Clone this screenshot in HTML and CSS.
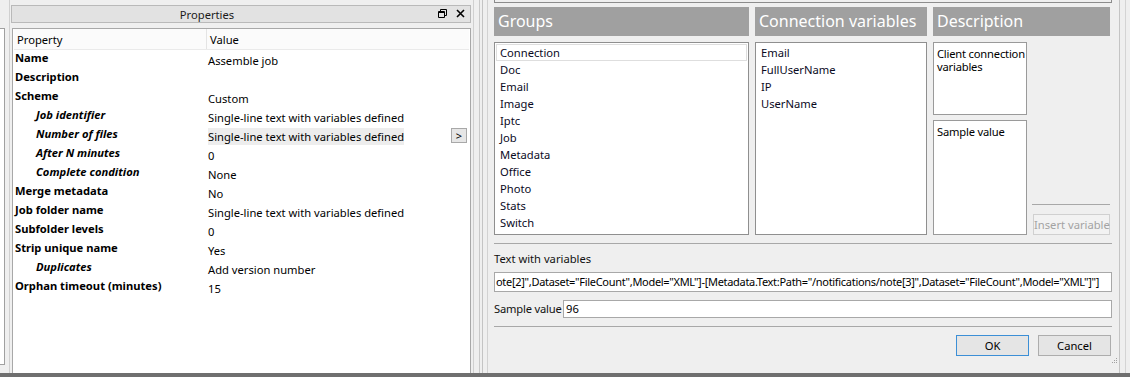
FILE: index.html
```html
<!DOCTYPE html>
<html lang="en">
<head>
    <meta charset="UTF-8">
    <title>Properties - Define text with variables</title>
    <link rel="stylesheet" href="styles.css">
</head>
<body>
    <div class="screen">
        <!-- Neighbouring panel, mostly cut off -->
        <div class="edge-strip">
            <div class="edge-box"></div>
        </div>

        <!-- Properties panel -->
        <section class="props">
            <header class="props-title">
                <span class="props-title-text">Properties</span>
                <span class="title-icons">
                    <svg width="9" height="9" viewBox="0 0 9 9">
                        <path d="M2.5 0.5h6v6h-2M2.5 0.5v2M0.5 2.5h6v6h-6z M0.5 3.5h6" fill="none" stroke="#000" stroke-width="1"/>
                    </svg>
                    <svg width="9" height="9" viewBox="0 0 9 9">
                        <path d="M1 1l7 7M8 1l-7 7" stroke="#000" stroke-width="1.6"/>
                    </svg>
                </span>
            </header>
            <div class="props-table">
                <div class="props-head">
                    <div class="head-prop">Property</div>
                    <div class="head-val">Value</div>
                </div>
                <div class="prop-row"><div class="prop-name">Name</div><div class="prop-val">Assemble job</div></div>
                <div class="prop-row"><div class="prop-name">Description</div><div class="prop-val"></div></div>
                <div class="prop-row"><div class="prop-name">Scheme</div><div class="prop-val">Custom</div></div>
                <div class="prop-row sub"><div class="prop-name">Job identifier</div><div class="prop-val">Single-line text with variables defined</div></div>
                <div class="prop-row sub">
                    <div class="prop-name">Number of files</div>
                    <div class="prop-val"><span class="val-edit">Single-line text with variables defined</span></div>
                    <button class="more-btn">&gt;</button>
                </div>
                <div class="prop-row sub"><div class="prop-name">After N minutes</div><div class="prop-val">0</div></div>
                <div class="prop-row sub"><div class="prop-name">Complete condition</div><div class="prop-val">None</div></div>
                <div class="prop-row"><div class="prop-name">Merge metadata</div><div class="prop-val">No</div></div>
                <div class="prop-row"><div class="prop-name">Job folder name</div><div class="prop-val">Single-line text with variables defined</div></div>
                <div class="prop-row"><div class="prop-name">Subfolder levels</div><div class="prop-val">0</div></div>
                <div class="prop-row"><div class="prop-name">Strip unique name</div><div class="prop-val">Yes</div></div>
                <div class="prop-row sub"><div class="prop-name">Duplicates</div><div class="prop-val">Add version number</div></div>
                <div class="prop-row"><div class="prop-name">Orphan timeout (minutes)</div><div class="prop-val">15</div></div>
            </div>
        </section>

        <div class="splitter"></div>

        <!-- Variables dialog -->
        <section class="dialog">
            <div class="dialog-top"></div>

            <div class="var-grid">
                <div class="col-head">Groups</div>
                <div class="col-head">Connection variables</div>
                <div class="col-head span-2">Description</div>

                <ul class="list-box">
                    <li class="selected">Connection</li>
                    <li>Doc</li>
                    <li>Email</li>
                    <li>Image</li>
                    <li>Iptc</li>
                    <li>Job</li>
                    <li>Metadata</li>
                    <li>Office</li>
                    <li>Photo</li>
                    <li>Stats</li>
                    <li>Switch</li>
                </ul>

                <ul class="list-box">
                    <li>Email</li>
                    <li>FullUserName</li>
                    <li>IP</li>
                    <li>UserName</li>
                </ul>

                <div class="desc-col">
                    <div class="desc-box">Client connection variables</div>
                    <div class="sample-box">Sample value</div>
                </div>

                <div class="insert-col">
                    <div class="insert-rule"></div>
                    <button class="btn disabled">Insert variable</button>
                </div>
            </div>

            <div class="rule"></div>

            <div class="field-label">Text with variables</div>
            <div class="text-input var-text">ote[2]",Dataset="FileCount",Model="XML"]-[Metadata.Text:Path="/notifications/note[3]",Dataset="FileCount",Model="XML"]"]</div>

            <div class="sample-row">
                <span class="field-label">Sample value</span>
                <div class="text-input sample-input">96</div>
            </div>

            <div class="rule"></div>

            <div class="dialog-buttons">
                <button class="btn default">OK</button>
                <button class="btn">Cancel</button>
            </div>

            <svg class="grip" width="7" height="7" viewBox="0 0 7 7">
                <rect x="5" y="1" width="1" height="1" fill="#a0a0a0"/>
                <rect x="3" y="3" width="1" height="1" fill="#a0a0a0"/>
                <rect x="5" y="3" width="1" height="1" fill="#a0a0a0"/>
                <rect x="1" y="5" width="1" height="1" fill="#a0a0a0"/>
                <rect x="3" y="5" width="1" height="1" fill="#a0a0a0"/>
                <rect x="5" y="5" width="1" height="1" fill="#a0a0a0"/>
            </svg>
        </section>

        <div class="right-strip"></div>
    </div>
    <div class="bottom-border"></div>
</body>
</html>
```

FILE: styles.css
```css
/* Global Styling */
body {
    margin: 0;
    font-family: 'Segoe UI', 'Noto Sans', sans-serif;
    font-size: 11.2px;
    color: #000;
    background: #efefef;
    width: 1130px;
    height: 377px;
    overflow: hidden;
}

.screen {
    display: flex;
    height: 373px;
}

.bottom-border {
    height: 4px;
    background: #6f6f6f;
}

ul {
    margin: 0;
    padding: 0;
    list-style: none;
}

button {
    font-family: inherit;
    font-size: 11.2px;
}

/* Left edge */
.edge-strip {
    width: 10px;
    border-right: 1px solid #d0d0d0;
    box-sizing: border-box;
    padding-top: 28px;
}

.edge-box {
    width: 4px;
    height: 335px;
    background: #fff;
    border: 1px solid #a0a0a0;
    border-left: none;
}

/* Properties panel */
.props {
    width: 464px;
    display: flex;
    flex-direction: column;
    padding: 5px 2px 0 1px;
    box-sizing: border-box;
    border-right: 1px solid #d0d0d0;
}

.props-title {
    height: 18px;
    display: flex;
    align-items: center;
    background: #e2e2e2;
    border: 1px solid #b9b9b9;
    box-sizing: border-box;
    position: relative;
}

.props-title-text {
    flex: 1;
    text-align: center;
    padding-right: 68px;
    color: #1a1a1a;
}

.title-icons {
    position: absolute;
    right: 5px;
    top: 3px;
    display: flex;
    gap: 9px;
}

.props-table {
    flex: 1;
    margin-top: 5px;
    margin-left: 1px;
    background: #fff;
    border: 1px solid #a8a8a8;
    border-bottom: none;
}

.props-head {
    display: flex;
    height: 20px;
    line-height: 21px;
    background: #fbfbfb;
    border-bottom: 1px solid #eaeaea;
    margin: 0 1px;
}

.head-prop {
    width: 189px;
    padding-left: 3px;
    border-right: 1px solid #e4e4e4;
}

.head-val {
    padding-left: 3px;
}

.prop-row {
    display: flex;
    height: 19px;
    line-height: 16px;
    position: relative;
}

.prop-name {
    width: 193px;
    padding-left: 2px;
    font-weight: bold;
}

.prop-row.sub .prop-name {
    padding-left: 23px;
    width: 172px;
    font-style: italic;
}

.prop-val {
    padding-top: 3px;
}

.val-edit {
    background: #ededed;
    padding: 1px 0;
}

.more-btn {
    position: absolute;
    right: 3px;
    top: 2px;
    width: 16px;
    height: 15px;
    padding: 0;
    line-height: 12px;
    border: 1px solid #a8a8a8;
    background: #e6e6e6;
    font-size: 11px;
}

/* Splitter */
.splitter {
    width: 6px;
    border-right: 1px solid #c9c9c9;
    box-sizing: border-box;
}

/* Dialog */
.dialog {
    position: relative;
    margin-left: 2px;
    width: 638px;
    padding: 0 7px 0 11px;
    box-sizing: border-box;
    border-left: 1px solid #c4c4c4;
    border-right: 1px solid #c4c4c4;
    box-shadow: inset 4px 0 0 #efefef, inset 5px 0 0 #d2d2d2;
}

.dialog-top {
    height: 2px;
    border: 1px solid #8c8c8c;
    border-top: none;
    margin-bottom: 4px;
}

.var-grid {
    display: grid;
    grid-template-columns: 255px 172px 94px 77px;
    grid-template-rows: 29px 193px;
    gap: 6px;
}

.col-head {
    background: #a0a0a0;
    color: #fff;
    font-size: 16px;
    line-height: 29px;
    padding-left: 4px;
    white-space: nowrap;
    overflow: hidden;
}

.col-head.span-2 {
    grid-column: span 2;
}

.list-box {
    background: #fff;
    border: 1px solid #8f8f8f;
    padding: 1px;
}

.list-box li {
    height: 17px;
    line-height: 17px;
    padding-left: 4px;
    color: #0a0a1e;
}

.list-box li.selected {
    border: 1px solid #dedede;
    height: 15px;
    line-height: 15px;
    padding-left: 3px;
}

.desc-col {
    display: flex;
    flex-direction: column;
    gap: 5px;
}

.desc-box,
.sample-box {
    background: #fff;
    border: 1px solid #9a9a9a;
    padding: 4px 1px 4px 3px;
    line-height: 13px;
    letter-spacing: -0.2px;
}

.desc-box {
    height: 63px;
}

.sample-box {
    flex: 1;
}

.insert-col {
    display: flex;
    flex-direction: column;
    justify-content: flex-end;
}

.insert-rule {
    border-top: 1px solid #a8a8a8;
    margin: 0 0 9px -1px;
}

.btn {
    height: 21px;
    padding: 0;
    border: 1px solid #adadad;
    background: #e5e5e5;
    color: #000;
    white-space: nowrap;
}

.btn.disabled {
    color: #a3a3a3;
    border-color: #d0d0d0;
    background: #f2f2f2;
}

.btn.default {
    border-color: #3c8fd6;
}

.rule {
    border-top: 1px solid #a8a8a8;
    margin-top: 8px;
}

.field-label {
    line-height: 16px;
    color: #111;
}

.dialog > .field-label {
    margin-top: 7px;
}

.text-input {
    background: #fff;
    border: 1px solid #a8a8a8;
    height: 18px;
    line-height: 18px;
    white-space: nowrap;
    overflow: hidden;
}

.var-text {
    margin-top: 5px;
    padding-left: 1px;
    font-size: 11px;
    letter-spacing: -0.3px;
}

.sample-row {
    display: flex;
    align-items: center;
    gap: 3px;
    margin-top: 8px;
}

.sample-row .field-label {
    letter-spacing: -0.2px;
    white-space: nowrap;
    flex-shrink: 0;
    width: 66px;
}

.sample-input {
    flex: 1;
    height: 16px;
    line-height: 16px;
    padding-left: 2px;
}

.dialog-buttons {
    display: flex;
    justify-content: flex-end;
    gap: 9px;
    margin-top: 8px;
    padding-right: 1px;
}

.dialog-buttons .btn {
    width: 73px;
}

.grip {
    position: absolute;
    right: 1px;
    bottom: 9px;
}

/* Right edge */
.right-strip {
    flex: 1;
    border-right: 1px solid #d4d4d4;
    margin-right: 4px;
}
```
